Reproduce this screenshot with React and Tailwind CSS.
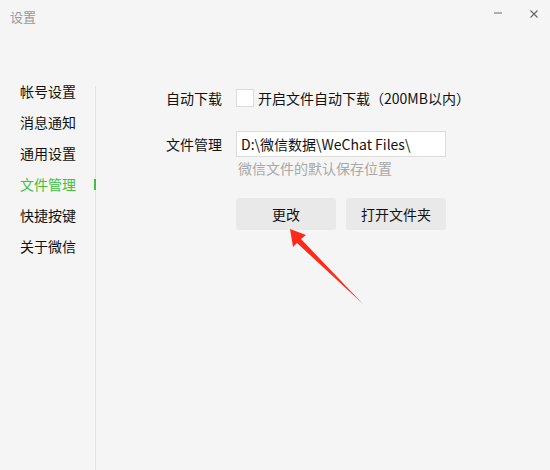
import React, { useState } from "react";

const NAV = ["帐号设置", "消息通知", "通用设置", "文件管理", "快捷按键", "关于微信"];

export default function App() {
    const [active, setActive] = useState("文件管理");
    const [autoDownload, setAutoDownload] = useState(false);

    return (
        <div
            className="relative w-[550px] h-[470px] overflow-hidden bg-[#f5f5f5] text-[#111] flex flex-col"
            style={{ fontFamily: '"Noto Sans CJK SC", "Noto Sans", sans-serif' }}
        >
            {/* title bar */}
            <div className="h-[76px] flex items-start justify-between">
                <div className="pl-[10px] pt-[8px] text-[13px] leading-[18px] text-[#9a9a9a]">设置</div>
                <div className="flex items-start pt-[9px] pr-[12px]">
                    <button className="w-[10px] h-[10px] flex items-center justify-center mt-[-1px]">
                        <span className="block w-[8px] h-[2px] bg-[#b0b0b0]" />
                    </button>
                    <button className="ml-[26px] w-[9px] h-[9px] flex items-center justify-center">
                        <svg width="8" height="8" viewBox="0 0 8 8">
                            <path d="M0.5 0.5 L7.5 7.5 M7.5 0.5 L0.5 7.5" stroke="#666" strokeWidth="1.1" />
                        </svg>
                    </button>
                </div>
            </div>

            <div className="flex flex-1">
                {/* sidebar */}
                <ul className="w-[95px] pl-[20px]">
                    {NAV.map((item) => (
                        <li
                            key={item}
                            onClick={() => setActive(item)}
                            className={`h-[31px] leading-[31px] text-[14px] cursor-pointer ${
                                active === item ? "text-[#3ec23b]" : "text-[#111]"
                            }`}
                        >
                            {item}
                        </li>
                    ))}
                </ul>
                <div className="w-px mt-[10px] bg-[#e3e3e3] self-stretch">
                    <div className="mt-[93px] -ml-px w-[2px] h-[11px] bg-[#3ec23b]" />
                </div>

                {/* content */}
                <div className="pl-[70px] pt-[13px] flex flex-col text-[14px]">
                    <div className="flex items-center h-[18px]">
                        <span className="w-[70px]">自动下载</span>
                        <button
                            onClick={() => setAutoDownload(!autoDownload)}
                            className="w-[18px] h-[18px] bg-white border border-[#dcdcdc] flex items-center justify-center"
                        >
                            {autoDownload && (
                                <svg width="12" height="12" viewBox="0 0 12 12">
                                    <path d="M2 6 L5 9 L10 3" stroke="#3ec23b" strokeWidth="1.6" fill="none" />
                                </svg>
                            )}
                        </button>
                        <span className="ml-[4px]">开启文件自动下载（200MB以内）</span>
                    </div>

                    <div className="flex items-center mt-[24px]">
                        <span className="w-[70px]">文件管理</span>
                        <div className="w-[210px] h-[26px] bg-white border border-[#dcdcdc] pl-[4px] leading-[24px] whitespace-nowrap">
                            D:\微信数据\WeChat Files\
                        </div>
                    </div>
                    <div className="ml-[72px] mt-[2px] leading-[18px] text-[#a8a8a8]">微信文件的默认保存位置</div>

                    <div className="flex gap-[10px] ml-[70px] mt-[21px]">
                        <button className="w-[100px] h-[32px] rounded-[3px] bg-[#e9e9e9] text-[14px]">更改</button>
                        <button className="w-[100px] h-[32px] rounded-[3px] bg-[#e9e9e9] text-[14px]">打开文件夹</button>
                    </div>
                </div>
            </div>

            {/* red annotation arrow */}
            <svg className="absolute left-0 top-0 pointer-events-none" width="550" height="470">
                <polygon
                    points="290,229 306,235 301,239 363,304 297,243 293,247"
                    fill="#ff2a1a"
                />
            </svg>
        </div>
    );
}
